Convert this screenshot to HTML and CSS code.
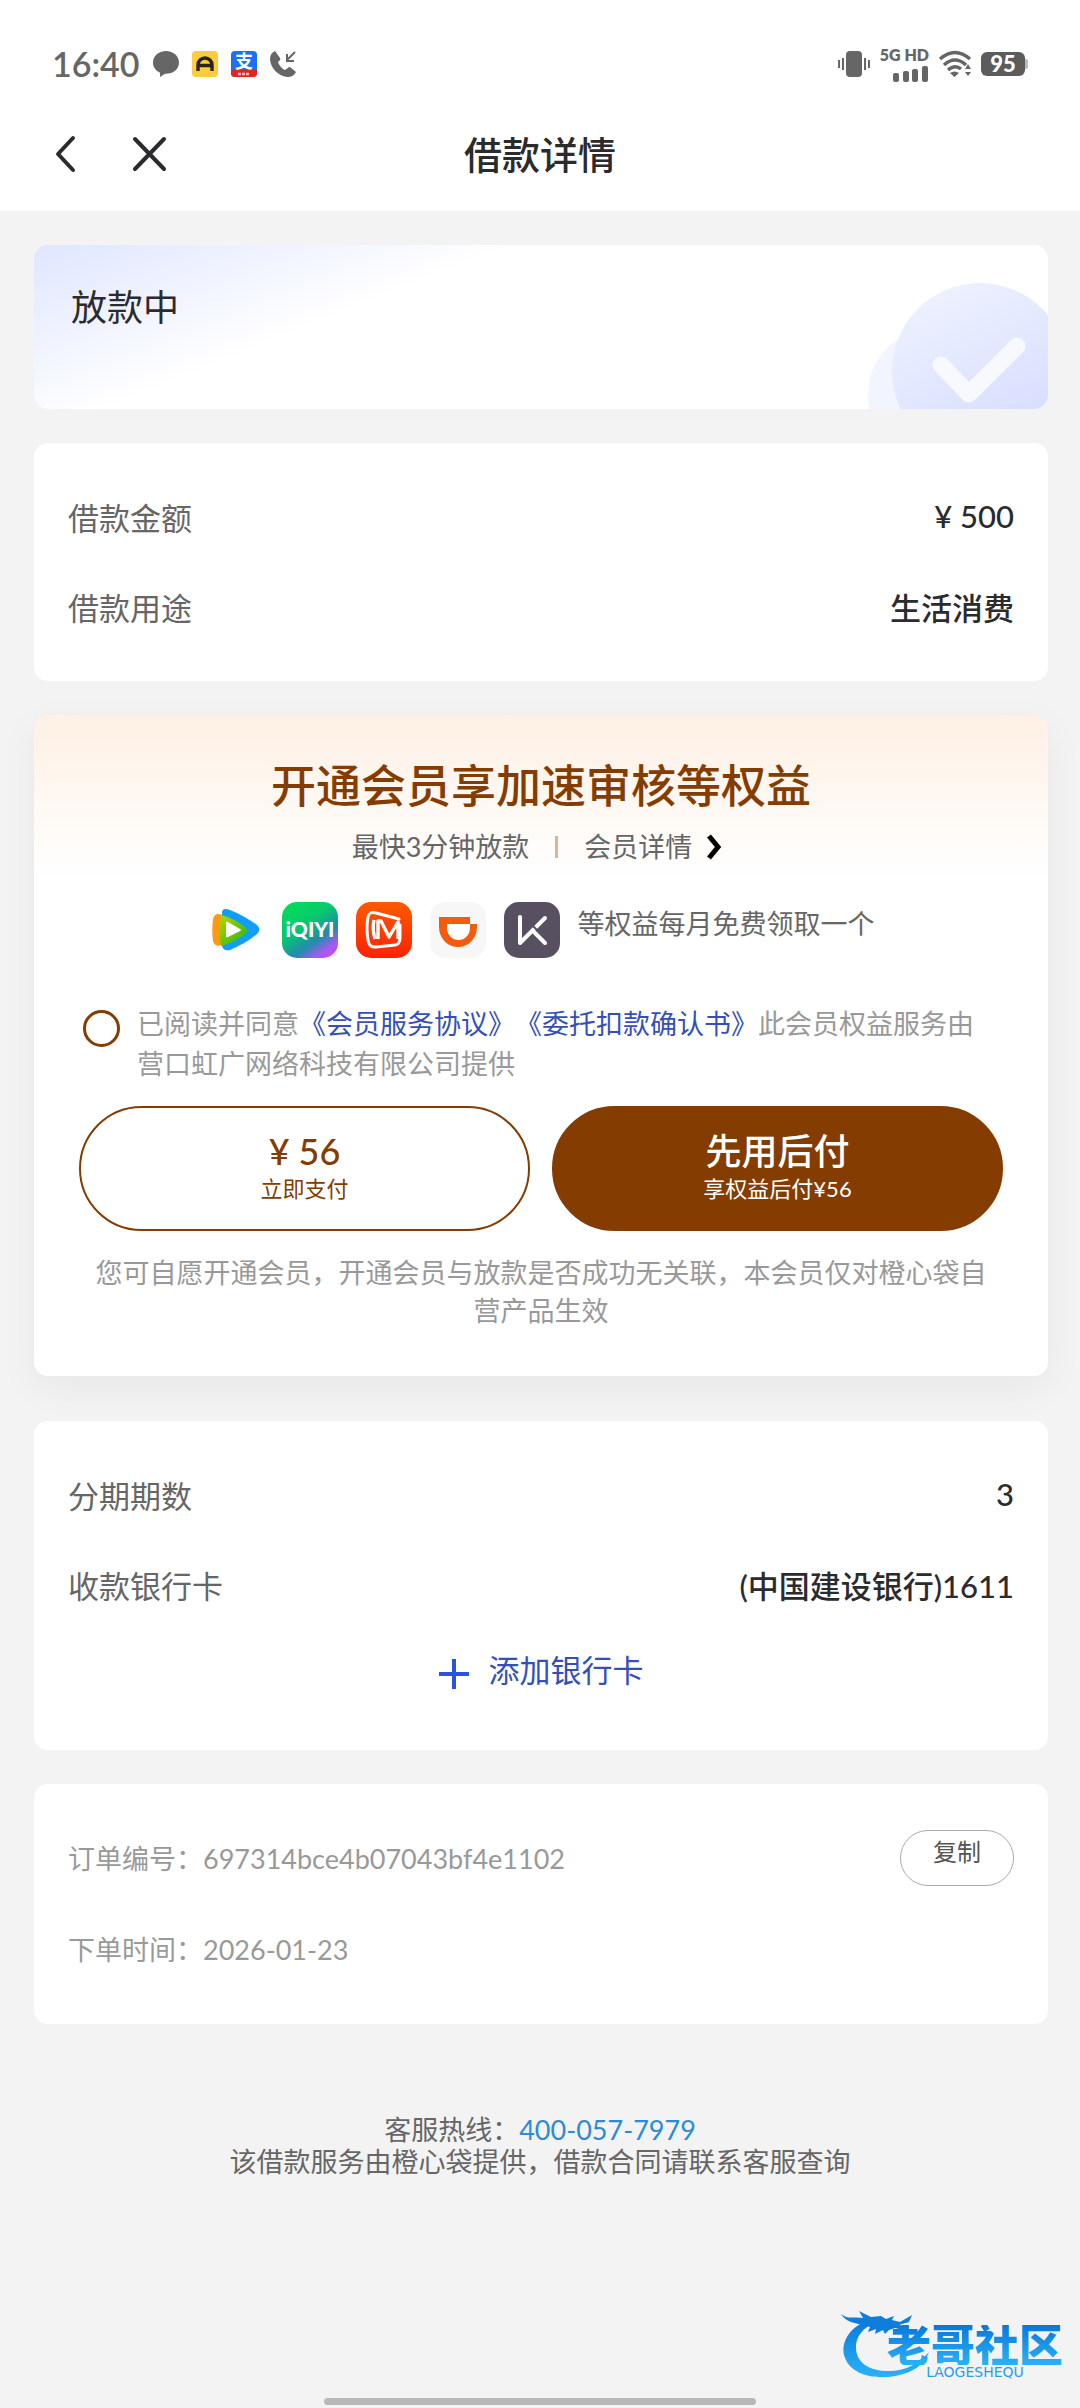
FILE: index.html
```html
<!DOCTYPE html>
<html lang="zh-CN">
<head>
	<meta charset="utf-8">
	<meta name="viewport" content="width=device-width, initial-scale=1">
	<title>借款详情</title>
	<link rel="stylesheet" href="styles.css">
</head>

<body>

<header class="header">
	<div class="status">
		<div class="status-left">
			<span class="time">16:40</span>
			<svg width="26" height="26" viewBox="0 0 26 26"><path d="M13 0C5.800 0 0 5 0 11.500c0 4.500 2.600 8.200 7 10.200V26l5-3.200c8 .4 14-4.600 14-11.300C26 5 20.200 0 13 0z" fill="#666"/></svg>
			<svg width="26" height="26" viewBox="0 0 26 26"><rect width="26" height="26" rx="4" fill="#fbcc3d"/><path d="M6 20V14a7 7 0 0 1 14 0v6M6 14.500h14" fill="none" stroke="#2a2214" stroke-width="3.400"/></svg>
			<svg width="26" height="26" viewBox="0 0 26 26"><rect width="26" height="26" rx="4" fill="#1b70f5"/><path d="M0 19q13-2 26 0v3a4 4 0 0 1-4 4H4a4 4 0 0 1-4-4z" fill="#e22424"/><text x="13" y="17" class="pay-glyph">支</text><path d="M7 23h12" stroke="#fbb" stroke-width="2.500" stroke-dasharray="3 1"/></svg>
			<svg width="26" height="26" viewBox="0 0 26 26"><path d="M5 0C1 2 0 5 0 9c1 8 8 16 17 17 4 0 7-1 9-5l-6-5c-2 0-3 2-5 3-3-1-6-5-7-8 1-1 3-2 2-4z" fill="#666"/><path d="M25 1l-8 8M17 3v7h7" fill="none" stroke="#666" stroke-width="2"/></svg>
		</div>
		<div class="status-right">
			<svg width="32" height="26" viewBox="0 0 32 26"><rect x="8" width="16" height="26" rx="4" fill="#666"/><path d="M1 9v8M5 7v12M27 7v12M31 9v8" stroke="#666" stroke-width="2"/></svg>
			<div class="signal">
				<span class="network">5G HD</span>
				<svg width="36" height="16" viewBox="0 0 36 16" fill="#666"><rect y="7" width="6" height="9" rx="2"/><rect x="10" y="5" width="6" height="11" rx="2"/><rect x="19" y="3" width="6" height="13" rx="2"/><rect x="29" width="6" height="16" rx="2"/></svg>
			</div>
			<svg width="32" height="26" viewBox="0 0 32 26"><path d="M1 8q15-13 30 0M5 14q11-10 22 0M9 19q7-6 13-1" fill="none" stroke="#666" stroke-width="3.400"/><path d="M11 22q4.500-3 9 0l-4.500 4zM26 18l3-5 3 5zM26 21h6l-3 4z" fill="#666"/></svg>
			<svg width="47" height="24" viewBox="0 0 47 24"><path d="M42 7h3a2 2 0 0 1 2 2v6a2 2 0 0 1-2 2h-3z" fill="#bbb"/><rect width="44" height="24" rx="6" fill="#5c5c5c"/><text x="22" y="20" class="battery-text">95</text></svg>
		</div>
	</div>
	<nav class="nav">
		<div class="nav-buttons">
			<button class="icon-button" aria-label="返回"><svg width="20" height="36" viewBox="0 0 20 36"><path d="M18 2L3 18l15 16" fill="none" stroke="#2b2b2d" stroke-width="4" stroke-linecap="round" stroke-linejoin="round"/></svg></button>
			<button class="icon-button" aria-label="关闭"><svg width="33" height="34" viewBox="0 0 33 34"><path d="M2 2l29 30M31 2L2 32" stroke="#2b2b2d" stroke-width="4" stroke-linecap="round"/></svg></button>
		</div>
		<h1 class="nav-title">借款详情</h1>
	</nav>
</header>

<main class="content">
	<section class="card state">
		<h2 class="state-title">放款中</h2>
		<svg class="state-mark" width="180" height="126" viewBox="0 0 180 126">
			<defs>
				<linearGradient id="disc" x1="0.300" y1="0" x2="0.700" y2="0.800"><stop offset="0" stop-color="#edf1ff"/><stop offset="1" stop-color="#d8dffe"/></linearGradient>
			</defs>
			<circle cx="65" cy="111" r="65" fill="#f2f4ff"/>
			<circle cx="112" cy="88" r="88" fill="url(#disc)"/>
			<path d="M73 82l28 29 48-48" fill="none" stroke="#f7f9ff" stroke-width="17" stroke-linecap="round" stroke-linejoin="round"/>
		</svg>
	</section>

	<section class="card">
		<div class="row"><span>借款金额</span><b>¥ 500</b></div>
		<div class="row"><span>借款用途</span><b>生活消费</b></div>
	</section>

	<section class="card member">
		<h2 class="member-title">开通会员享加速审核等权益</h2>
		<p class="member-sub">
			<span>最快3分钟放款</span>
			<i class="divider"></i>
			<a href="#">会员详情<svg width="16" height="26" viewBox="0 0 16 26"><path d="M3 2l9 11-9 11" fill="none" stroke="#000" stroke-width="5"/></svg></a>
		</p>
		<div class="benefits">
			<!-- 腾讯视频 -->
			<svg width="56" height="56" viewBox="0 0 56 56">
				<defs><linearGradient id="tv" x1="0" y1="0" x2="1" y2="1"><stop offset="0" stop-color="#b5d800"/><stop offset="1" stop-color="#20b510"/></linearGradient></defs>
				<path d="M14 10c1-4 5-3 8-2 10 4 19 9 27 15 3 3 3 6 0 9-8 7-17 12-27 16-4 1-7 0-8-4z" fill="#139dfa"/>
				<path d="M5 17c1-5 5-6 9-4v30c-5 2-8 0-9-4-1-7-1-15 0-22z" fill="#ff9a10"/>
				<path d="M13 13c9 2 18 7 25 13 2 2 2 3 0 5-7 6-15 10-25 13-2-10-2-21 0-31z" fill="url(#tv)"/>
				<path d="M18 21q0-2 2-1l12 7q2 1 0 2l-12 6q-2 1-2-1z" fill="#fff"/>
			</svg>
			<!-- 爱奇艺 -->
			<svg width="56" height="56" viewBox="0 0 56 56">
				<defs><linearGradient id="iq" x1="0.200" y1="0" x2="0.900" y2="1"><stop offset="0" stop-color="#04db5b"/><stop offset="0.350" stop-color="#08c96c"/><stop offset="0.650" stop-color="#208daa"/><stop offset="0.850" stop-color="#a45bf0"/><stop offset="1" stop-color="#d343f5"/></linearGradient></defs>
				<rect width="56" height="56" rx="15" fill="url(#iq)"/><text x="28" y="35" class="iqiyi-text">iQIYI</text>
			</svg>
			<!-- 芒果TV -->
			<svg width="56" height="56" viewBox="0 0 56 56">
				<defs><linearGradient id="mg" x1="0" y1="0" x2="0" y2="1"><stop offset="0" stop-color="#ff5a00"/><stop offset="1" stop-color="#fb2200"/></linearGradient></defs>
				<rect width="56" height="56" rx="15" fill="url(#mg)"/>
				<path d="M43 17L20 11q-7-2-8 4-2 11 0 23 1 8 8 7l19-2q5-1 5-7V23" fill="none" stroke="#fff" stroke-width="3" stroke-linecap="round"/>
				<path d="M19 37q-3-10-1-19M22 37V19h3l8 16 9-15v17" fill="none" stroke="#fff" stroke-width="3.400" stroke-linejoin="round"/>
			</svg>
			<!-- 滴滴 -->
			<svg width="56" height="56" viewBox="0 0 56 56">
				<rect width="56" height="56" rx="15" fill="#f7f7f7"/>
				<path d="M9 15h31v7h7v3a19 20 0 0 1-38 0z" fill="#f45b0c"/><path d="M17 22h23v4a11.500 12 0 0 1-23 0z" fill="#fff"/>
			</svg>
			<!-- Keep -->
			<svg width="56" height="56" viewBox="0 0 56 56">
				<rect width="56" height="56" rx="15" fill="#584f60"/>
				<path d="M16 15v26l25-25M29 29l12 12" fill="none" stroke="#fff" stroke-width="4" stroke-linecap="round" stroke-linejoin="round"/><path d="M28 23l7 7" stroke="#584f60" stroke-width="2"/>
			</svg>
			<span>等权益每月免费领取一个</span>
		</div>
		<div class="consent">
			<input type="checkbox" id="agree" class="agree">
			<label for="agree">已阅读并同意<a href="#">《会员服务协议》</a><a href="#">《委托扣款确认书》</a>此会员权益服务由营口虹广网络科技有限公司提供</label>
		</div>
		<div class="pay">
			<button class="pay-button"><strong>¥ 56</strong><small>立即支付</small></button>
			<button class="pay-button pay-later"><strong>先用后付</strong><small>享权益后付¥56</small></button>
		</div>
		<p class="member-note">您可自愿开通会员，开通会员与放款是否成功无关联，本会员仅对橙心袋自营产品生效</p>
	</section>

	<section class="card">
		<div class="row"><span>分期期数</span><b>3</b></div>
		<div class="row"><span>收款银行卡</span><b>(中国建设银行)1611</b></div>
		<button class="add-card"><svg width="30" height="30" viewBox="0 0 30 30"><path d="M15 0v30M0 15h30" stroke="#2c52e0" stroke-width="4"/></svg>添加银行卡</button>
	</section>

	<section class="card order">
		<div class="row"><span>订单编号：697314bce4b07043bf4e1102</span><button class="copy">复制</button></div>
		<div class="row"><span>下单时间：2026-01-23</span></div>
	</section>
</main>

<footer class="footer">
	<p>客服热线：<a href="tel:400-057-7979">400-057-7979</a></p>
	<p>该借款服务由橙心袋提供，借款合同请联系客服查询</p>
</footer>

<div class="home-bar"></div>

<div class="watermark">
	<svg class="dragon" width="92" height="72" viewBox="0 0 92 72">
		<defs><linearGradient id="dragon" x1="0" y1="0" x2="0" y2="1"><stop offset="0" stop-color="#0a77d8"/><stop offset="1" stop-color="#2ab2f8"/></linearGradient></defs>
		<path d="M34 8C10 14-2 32 4 48c6 16 28 22 50 18 18-3 30-12 34-24-10 12-24 19-40 19-20 0-32-8-33-22C14 27 22 17 36 12z" fill="url(#dragon)"/>
		<path d="M0 4c7 6 14 2 22 4l-4-7 12 6 10-1 5 3 8-3-2 4 8 2 12-7-3 7-10 3 10 1-2 5-12-3-6 2-4 4-2-4-8 4 1-5-8 3 2-5C18 13 6 14 0 4z" fill="#0d7edb"/>
	</svg>
	<div class="brand">
		<span class="brand-name">老哥社区</span>
		<span class="brand-pinyin">LAOGESHEQU</span>
	</div>
</div>

</body>
</html>
```
FILE: styles.css
```css
* {box-sizing: border-box;}
body {margin: 0; min-height: 100vh; position: relative; display: flex; flex-direction: column; background: #f3f3f3; color: #666; font-family: Lato, "Noto Sans CJK SC", sans-serif; font-size: 27px; text-spacing-trim: space-all;}
h1, h2, p {margin: 0;}
h1, h2 {font-weight: 500;}
a {color: inherit; text-decoration: none;}
button {border: 0; padding: 0; background: none; font: inherit; color: inherit; cursor: pointer;}
svg {display: block; flex: none; overflow: visible;}

.header {background: #fff;}
.status {display: flex; justify-content: space-between; align-items: center; height: 97px; padding: 31px 52px 0;}
.status-left {display: flex; align-items: center; gap: 13px;}
.status-right {display: flex; align-items: center; gap: 10px;}
.time {font-size: 34px; line-height: 40px; font-weight: 600;}
.signal {display: flex; flex-direction: column; align-items: flex-end; gap: 3px;}
.network {font-size: 16px; line-height: 16px; font-weight: 800;}
.battery-text {font-size: 22px; font-weight: 900; fill: #fff; text-anchor: middle;}
.pay-glyph {font-size: 18px; font-weight: 700; fill: #fff; text-anchor: middle;}
.iqiyi-text {font-size: 21px; font-weight: 900; fill: #fff; text-anchor: middle;}
.nav {display: grid; grid-template-columns: 1fr auto 1fr; align-items: center; height: 114px; padding: 0 55px;}
.nav-buttons {display: flex; align-items: center; gap: 58px;}
.nav-title {font-size: 38px; line-height: 48px; color: #2b2b2d;}

.content {display: flex; flex-direction: column; gap: 34px; padding: 34px 32px 0 34px;}
.card {background: #fff; border-radius: 14px; padding: 28px 34px 30px;}
.row {display: flex; justify-content: space-between; align-items: center; height: 90px; font-size: 31px;}
.row b {font-weight: 500; color: #2b2b2d;}

.state {display: flex; justify-content: space-between; align-items: flex-end; height: 164px; padding: 0 0 0 37px; overflow: hidden; background: linear-gradient(158deg, #dfe6ff, #fff 180px);}
.state-title {align-self: flex-start; padding-top: 38px; font-size: 36px; line-height: 48px; font-weight: 400; color: #2b2b2d;}
.state-mark {overflow: hidden;}

.member {margin-bottom: 11px; padding: 41px 45px 46px; background: linear-gradient(#fef0e4, #fff 165px); box-shadow: 0 12px 40px rgba(0, 20, 20, 0.050);}
.member-title {font-size: 45px; line-height: 60px; color: #843c00; text-align: center;}
.member-sub {display: flex; justify-content: center; align-items: center; gap: 26px; margin-top: 12px; padding-right: 8px; line-height: 38px;}
.member-sub a {display: flex; align-items: center; gap: 14px;}
.divider {width: 3px; height: 22px; background: #d9b697;}
.benefits {display: flex; justify-content: center; gap: 18px; margin-top: 36px; line-height: 44px;}
.consent {display: flex; align-items: flex-start; gap: 17px; margin-top: 46px; padding: 0 14px 0 4px; line-height: 40px; color: #999;}
.consent a {color: #3450b8;}
.agree {flex: none; appearance: none; width: 37px; height: 37px; margin: 6px 0 0; border: 3px solid #843c00; border-radius: 50%;}
.agree:checked {background: #843c00;}
.pay {display: grid; grid-template-columns: 1fr 1fr; gap: 22px; margin-top: 22px;}
.pay-button {display: flex; flex-direction: column; align-items: center; justify-content: center; height: 125px; padding-bottom: 6px; border: 2px solid #843c00; border-radius: 63px; color: #843c00;}
.pay-button strong {font-size: 36px; line-height: 46px; font-weight: 500;}
.pay-button small {font-size: 22px; line-height: 30px;}
.pay-later {background: #843c00; color: #fff;}
.member-note {margin-top: 23px; padding: 0 14px; line-height: 38px; color: #999; text-align: center;}

.add-card {display: flex; justify-content: center; align-items: flex-end; gap: 20px; width: 100%; height: 91px; padding-bottom: 31px; font-size: 31px; line-height: 38px; color: #3450b8;}
.order .row {height: 91px; font-size: 27px; color: #999;}
.copy {width: 114px; height: 56px; padding-bottom: 12px; border: 1px solid #aaa; border-radius: 28px; font-size: 24px; line-height: 32px; color: #555;}

.footer {padding-top: 90px; line-height: 32px; text-align: center;}
.footer a {color: #2b8bd8;}
.home-bar {width: 40%; height: 7px; margin: auto auto 3px; border-radius: 4px; background: #b8b8b8;}

/* floats over the bottom corner of the page */
.watermark {position: absolute; right: 17px; bottom: 26px; display: flex; align-items: flex-start;}
.dragon {margin-right: -46px;}
.brand {display: flex; flex-direction: column; align-items: center; padding-top: 15px;}
.brand-name {font-size: 44px; line-height: 40px; font-weight: 900; background: linear-gradient(#0a77d8, #2ab2f8); background-clip: text; color: transparent;}
.brand-pinyin {font-family: "DejaVu Sans", sans-serif; font-size: 14px; line-height: 14px; color: #2b9de8;}
```
